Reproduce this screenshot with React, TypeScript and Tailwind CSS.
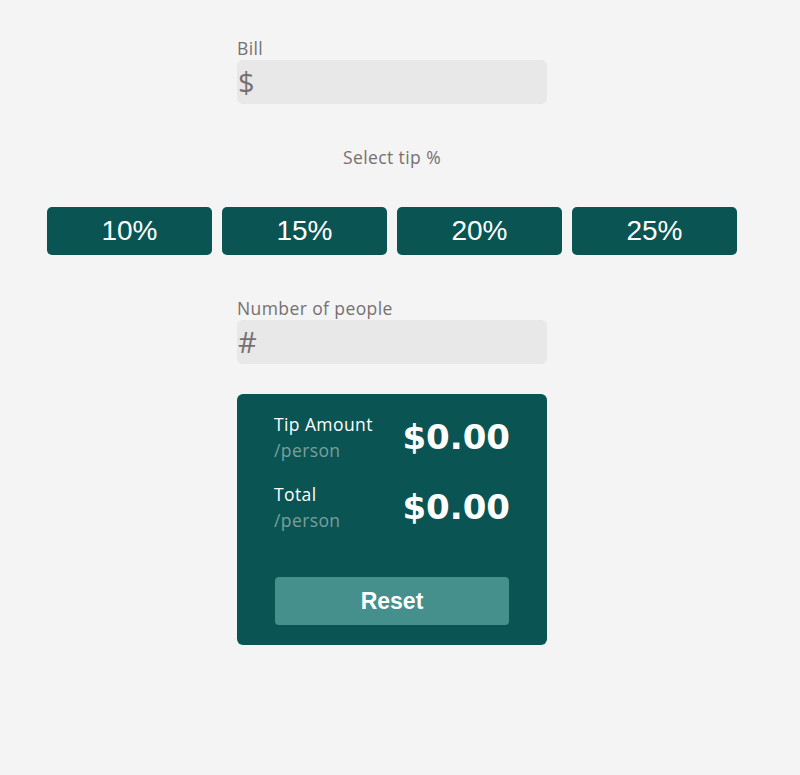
const tips = ["10%", "15%", "20%", "25%"]

export default function App() {
  return (
    <div className="min-h-[775px] bg-[#f4f4f4] font-['Open_Sans',sans-serif] tracking-[0.4px]">
      <div className="ml-[47px] flex w-[690px] flex-col items-center pt-[37px]">
        <div className="w-[310px]">
          <label className="block text-[17.5px] leading-[22px] text-[#767070]">Bill</label>
          <div className="mt-[1px] flex h-[44px] items-center rounded-[6px] bg-[#e8e8e8] px-[1px]">
            <span className="text-[29px] text-[#767070]">$</span>
          </div>
        </div>

        <p className="mt-[42px] text-[17.5px] leading-[22px] text-[#767070]">Select tip %</p>

        <div className="mt-[39px] grid w-full grid-cols-4 gap-[10px]">
          {tips.map((t) => (
            <button
              key={t}
              className="h-[48px] rounded-[5px] bg-[#0a5553] font-['Liberation_Sans',sans-serif] text-[28px] tracking-normal text-white"
            >
              {t}
            </button>
          ))}
        </div>

        <div className="mt-[42px] w-[310px]">
          <label className="block text-[17.5px] leading-[22px] text-[#767070]">Number of people</label>
          <div className="mt-[1px] flex h-[44px] items-center rounded-[6px] bg-[#e8e8e8] px-[1px]">
            <span className="text-[29px] text-[#767070]">#</span>
          </div>
        </div>

        <div className="mt-[30px] flex h-[251px] w-[310px] flex-col rounded-[6px] bg-[#0a5553] px-[37px] pt-[17px]">
          <div className="flex items-center justify-between">
            <div className="leading-[26px]">
              <p className="text-[17.5px] text-white">Tip Amount</p>
              <p className="text-[17.5px] text-[#7a9f9c]">/person</p>
            </div>
            <span className="font-['DejaVu_Sans',sans-serif] text-[34px] font-bold tracking-normal text-white">$0.00</span>
          </div>
          <div className="mt-[18px] flex items-center justify-between">
            <div className="leading-[26px]">
              <p className="text-[17.5px] text-white">Total</p>
              <p className="text-[17.5px] text-[#7a9f9c]">/person</p>
            </div>
            <span className="font-['DejaVu_Sans',sans-serif] text-[34px] font-bold tracking-normal text-white">$0.00</span>
          </div>
          <button className="mt-auto mb-[20px] ml-[1px] h-[48px] w-[234px] rounded-[4px] bg-[#458f8c] font-['Liberation_Sans',sans-serif] text-[23px] font-bold tracking-normal text-white">
            Reset
          </button>
        </div>
      </div>
    </div>
  )
}
